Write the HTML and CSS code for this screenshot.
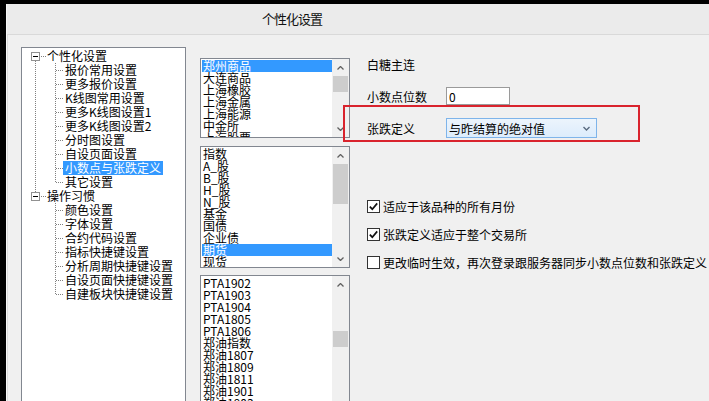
FILE: index.html
```html
<!DOCTYPE html>
<html lang="zh-CN">
<head>
    <meta charset="UTF-8">
    <title>个性化设置</title>
    <link rel="stylesheet" href="styles.css">
</head>
<body>
<div class="screen">
    <div class="window">
        <div class="titlebar">个性化设置</div>
        <div class="content">
            <!-- settings tree -->
            <div class="tree-box">
                <ul class="tree">
                    <li class="node">
                        <div class="root-row"><span class="toggle"></span><span class="hline"></span><span class="label">个性化设置</span></div>
                        <ul class="children">
                            <li><span class="label">报价常用设置</span></li>
                            <li><span class="label">更多报价设置</span></li>
                            <li><span class="label">K线图常用设置</span></li>
                            <li><span class="label">更多K线图设置1</span></li>
                            <li><span class="label">更多K线图设置2</span></li>
                            <li><span class="label">分时图设置</span></li>
                            <li><span class="label">自设页面设置</span></li>
                            <li><span class="label selected">小数点与张跌定义</span></li>
                            <li><span class="label">其它设置</span></li>
                        </ul>
                    </li>
                    <li class="node">
                        <div class="root-row"><span class="toggle"></span><span class="hline"></span><span class="label">操作习惯</span></div>
                        <ul class="children">
                            <li><span class="label">颜色设置</span></li>
                            <li><span class="label">字体设置</span></li>
                            <li><span class="label">合约代码设置</span></li>
                            <li><span class="label">指标快捷键设置</span></li>
                            <li><span class="label">分析周期快捷键设置</span></li>
                            <li><span class="label">自设页面快捷键设置</span></li>
                            <li><span class="label">自建板块快捷键设置</span></li>
                        </ul>
                    </li>
                </ul>
            </div>

            <!-- market / category / contract lists -->
            <div class="lists">
                <div class="listbox list1">
                    <ul class="items">
                        <li class="selected">郑州商品</li>
                        <li>大连商品</li>
                        <li>上海橡胶</li>
                        <li>上海金属</li>
                        <li>上海能源</li>
                        <li>中金所</li>
                        <li>上海股票</li>
                    </ul>
                    <div class="scrollbar">
                        <span class="arrow"><svg width="7" height="4" viewBox="0 0 7 4"><polyline points="0.5,3.5 3.5,0.5 6.5,3.5" fill="none" stroke="#606060" stroke-width="1.3"/></svg></span>
                        <span class="track"><span class="thumb short"></span></span>
                        <span class="arrow"><svg width="7" height="4" viewBox="0 0 7 4"><polyline points="0.5,0.5 3.5,3.5 6.5,0.5" fill="none" stroke="#606060" stroke-width="1.3"/></svg></span>
                    </div>
                </div>
                <div class="listbox list2">
                    <ul class="items">
                        <li>指数</li>
                        <li>A_股</li>
                        <li>B_股</li>
                        <li>H_股</li>
                        <li>N_股</li>
                        <li>基金</li>
                        <li>国债</li>
                        <li>企业债</li>
                        <li class="selected">期货</li>
                        <li>现货</li>
                    </ul>
                    <div class="scrollbar">
                        <span class="arrow"><svg width="7" height="4" viewBox="0 0 7 4"><polyline points="0.5,3.5 3.5,0.5 6.5,3.5" fill="none" stroke="#606060" stroke-width="1.3"/></svg></span>
                        <span class="track"><span class="thumb tall"></span></span>
                        <span class="arrow"><svg width="7" height="4" viewBox="0 0 7 4"><polyline points="0.5,0.5 3.5,3.5 6.5,0.5" fill="none" stroke="#606060" stroke-width="1.3"/></svg></span>
                    </div>
                </div>
                <div class="listbox list3">
                    <ul class="items">
                        <li>PTA1902</li>
                        <li>PTA1903</li>
                        <li>PTA1904</li>
                        <li>PTA1805</li>
                        <li>PTA1806</li>
                        <li>郑油指数</li>
                        <li>郑油1807</li>
                        <li>郑油1809</li>
                        <li>郑油1811</li>
                        <li>郑油1901</li>
                        <li>郑油1903</li>
                    </ul>
                    <div class="scrollbar">
                        <span class="arrow"><svg width="7" height="4" viewBox="0 0 7 4"><polyline points="0.5,3.5 3.5,0.5 6.5,3.5" fill="none" stroke="#606060" stroke-width="1.3"/></svg></span>
                        <span class="track"><span class="thumb short scrolled"></span></span>
                    </div>
                </div>
            </div>

            <!-- settings for selected contract -->
            <div class="settings">
                <div class="caption">白糖主连</div>
                <div class="field decimals">
                    <span class="field-label">小数点位数</span>
                    <input class="text-input" type="text" value="0">
                </div>
                <div class="field updown">
                    <span class="field-label">张跌定义</span>
                    <div class="combo">
                        <span>与昨结算的绝对值</span>
                        <svg width="7" height="5" viewBox="0 0 7 5"><polyline points="0.5,1 3.5,4 6.5,1" fill="none" stroke="#5a6b80" stroke-width="1.4"/></svg>
                    </div>
                </div>
                <label class="check-row first">
                    <span class="box"><svg width="11" height="11" viewBox="0 0 11 11"><polyline points="1.8,5.6 4.3,8.2 9.2,2.4" fill="none" stroke="#111" stroke-width="1.7"/></svg></span>
                    <span>适应于该品种的所有月份</span>
                </label>
                <label class="check-row">
                    <span class="box"><svg width="11" height="11" viewBox="0 0 11 11"><polyline points="1.8,5.6 4.3,8.2 9.2,2.4" fill="none" stroke="#111" stroke-width="1.7"/></svg></span>
                    <span>张跌定义适应于整个交易所</span>
                </label>
                <label class="check-row">
                    <span class="box"></span>
                    <span>更改临时生效，再次登录跟服务器同步小数点位数和张跌定义</span>
                </label>
            </div>
        </div>
    </div>
    <div class="annotation"></div>
</div>
</body>
</html>
```

FILE: styles.css
```css
body {
    margin: 0;
    background-color: #000;
    font-family: "Noto Sans CJK SC", "Noto Sans", sans-serif;
    font-size: 12px;
    color: #000;
    overflow: hidden;
}
.screen {
    position: relative;
    width: 709px;
    height: 401px;
    padding: 4px 0 0 6px;
    box-sizing: border-box;
    display: flex;
    overflow: hidden;
}
.window {
    flex: 1;
    background-color: #f0f0f0;
    border-left: 1px solid #f7f7f7;
    display: flex;
    flex-direction: column;
    min-width: 0;
}
.titlebar {
    height: 30px;
    line-height: 30px;
    background-color: #ebebeb;
    border-bottom: 1px solid #d9d9d9;
    padding-left: 255px;
    font-size: 13px;
    letter-spacing: -1px;
    color: #111;
}
.content {
    flex: 1;
    display: flex;
    align-items: flex-start;
    padding: 12px 0 0 13px;
    border-left: 1px solid #dcdcdc;
}

/* tree */
.tree-box {
    flex: none;
    width: 165px;
    height: 360px;
    box-sizing: border-box;
    border: 1px solid #828790;
    background-color: #fff;
}
.tree, .children {
    list-style: none;
    margin: 0;
    padding: 0;
}
.tree {
    padding-top: 1px;
}
.node {
    position: relative;
}
.node:not(:last-child)::before {
    content: "";
    position: absolute;
    left: 13px;
    top: 12px;
    bottom: -3px;
    border-left: 1px dotted #808080;
}
.root-row {
    display: flex;
    align-items: center;
    height: 14px;
    line-height: 14px;
}
.toggle {
    position: relative;
    width: 9px;
    height: 9px;
    box-sizing: border-box;
    border: 1px solid #919191;
    margin-left: 9px;
    background-color: #fff;
}
.toggle::after {
    content: "";
    position: absolute;
    left: 1px;
    right: 1px;
    top: 3px;
    height: 1px;
    background-color: #000;
}
.hline {
    width: 5px;
    margin: 0 1px;
    border-top: 1px dotted #808080;
}
.children {
    position: relative;
}
.children::before {
    content: "";
    position: absolute;
    left: 33px;
    top: 0;
    bottom: 7px;
    border-left: 1px dotted #808080;
}
.children li {
    display: flex;
    align-items: center;
    height: 14px;
    white-space: nowrap;
}
.children li::before {
    content: "";
    width: 7px;
    margin-left: 34px;
    border-top: 1px dotted #808080;
}
.children .label {
    padding: 0 2px;
    line-height: 14px;
}
.label.selected {
    background-color: #3399ff;
    color: #fff;
}

/* lists */
.lists {
    flex: none;
    width: 150px;
    margin: 11px 0 0 14px;
    display: flex;
    flex-direction: column;
}
.listbox {
    display: flex;
    border: 1px solid #828790;
    background-color: #fff;
    box-sizing: border-box;
}
.list1 {
    height: 80px;
    margin-bottom: 8px;
}
.list2 {
    height: 122px;
    margin-bottom: 7px;
}
.list3 {
    height: 140px;
}
.items {
    flex: 1;
    list-style: none;
    margin: 0;
    padding: 1px 0 0 1px;
    overflow: hidden;
}
.items li {
    height: 12px;
    line-height: 12px;
    padding-left: 1px;
    white-space: nowrap;
}
.items li.selected {
    background-color: #3399ff;
    color: #fff;
}
.scrollbar {
    width: 17px;
    background-color: #f0f0f0;
    display: flex;
    flex-direction: column;
}
.arrow {
    height: 17px;
    display: flex;
    align-items: center;
    justify-content: center;
}
.track {
    flex: 1;
    display: flex;
    flex-direction: column;
}
.thumb {
    background-color: #cdcdcd;
    margin: 0 1px;
}
.thumb.short {
    height: 16px;
}
.thumb.tall {
    height: 40px;
}
.thumb.scrolled {
    margin-top: 38px;
}

/* right side */
.settings {
    display: flex;
    flex-direction: column;
    margin: 11px 0 0 17px;
    white-space: nowrap;
}
.caption {
    height: 14px;
    line-height: 14px;
}
.field {
    display: flex;
    align-items: center;
}
.field-label {
    width: 79px;
}
.decimals {
    margin-top: 15px;
    height: 18px;
}
.updown {
    margin-top: 13px;
    height: 20px;
}
.text-input {
    width: 64px;
    height: 18px;
    box-sizing: border-box;
    border: 1px solid #9a9a9a;
    background-color: #fff;
    padding: 0 0 0 2px;
    margin: 0;
    font: inherit;
    line-height: 16px;
    outline: none;
}
.combo {
    width: 151px;
    height: 20px;
    box-sizing: border-box;
    border: 1px solid #7eb4ea;
    background: linear-gradient(#ecf4fc, #dcecfc);
    display: flex;
    align-items: center;
    justify-content: space-between;
    padding: 0 6px 0 2px;
}
.check-row {
    display: flex;
    align-items: center;
    gap: 3px;
    height: 16px;
    margin-top: 12px;
}
.check-row.first {
    margin-top: 60px;
}
.box {
    width: 13px;
    height: 13px;
    box-sizing: border-box;
    border: 1px solid #333;
    background-color: #fff;
    display: flex;
    align-items: center;
    justify-content: center;
}
.annotation {
    position: absolute;
    left: 343px;
    top: 105px;
    width: 297px;
    height: 37px;
    box-sizing: border-box;
    border: 2px solid #d9232d;
}
```
